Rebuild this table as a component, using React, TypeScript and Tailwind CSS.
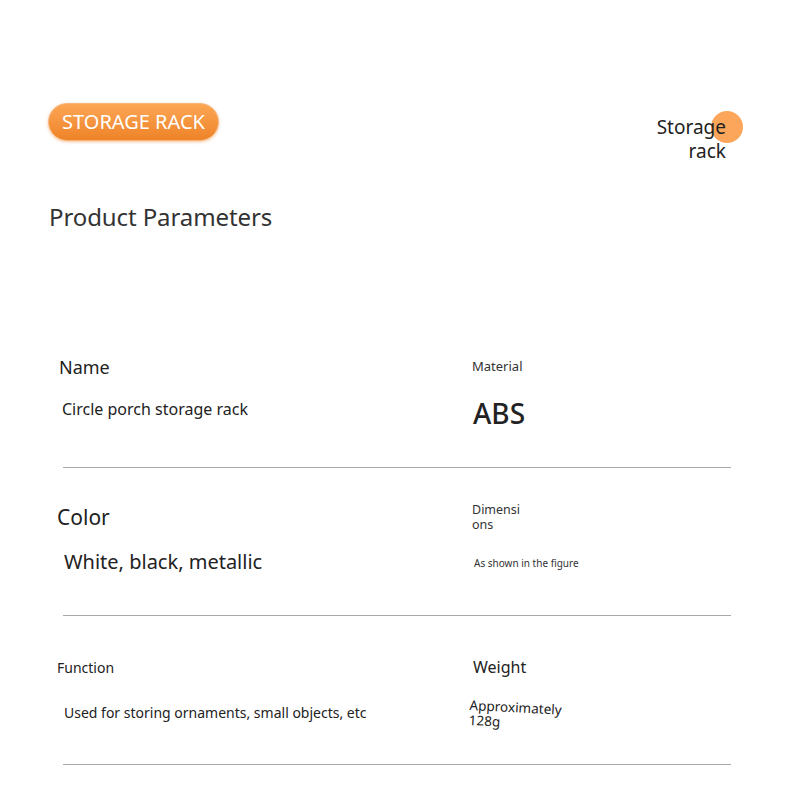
export default function App() {
  return (
    <div className="w-[790px] h-[803px] bg-white font-['Noto_Sans',sans-serif] text-[#222] overflow-hidden">
      <div className="flex justify-between items-start pt-[103px] pl-[48px] pr-[64px]">
        <div className="h-[38px] w-[171px] rounded-full bg-gradient-to-b from-[#fca654] to-[#ee8326] border border-[#f7b57a] shadow-[0_1px_3px_rgba(230,120,30,0.45)] flex items-center justify-center text-white text-[20px] leading-none">
          STORAGE RACK
        </div>
        <div className="relative mt-[12px] text-right text-[19px] leading-[24px]">
          <div className="absolute left-[54px] top-[-4px] w-[32px] h-[32px] rounded-full bg-[#fba65a]"></div>
          <div className="relative">
            Storage
            <br />
            rack
          </div>
        </div>
      </div>

      <h2 className="mt-[38px] ml-[49px] text-[24px] leading-[32px] text-[#333] tracking-[-0.1px]">Product Parameters</h2>

      <div className="mt-[117px]">
        <div className="flex h-[117px]">
          <div className="w-[472px] pt-[5px]">
            <div className="ml-[59px] text-[18px] leading-[24px]">Name</div>
            <div className="ml-[62px] mt-[19px] text-[16px] leading-[22px]">Circle porch storage rack</div>
          </div>
          <div className="pt-[7px]">
            <div className="text-[13px] leading-[18px] text-[#333]">Material</div>
            <div className="ml-[1px] mt-[20px] text-[28px] leading-[36px] font-medium">ABS</div>
          </div>
        </div>
        <div className="ml-[63px] w-[668px] h-px bg-[#a8a8a8]"></div>

        <div className="flex h-[147px]">
          <div className="w-[472px] pt-[35px]">
            <div className="ml-[57px] text-[21px] leading-[28px]">Color</div>
            <div className="ml-[64px] mt-[17px] text-[20px] leading-[28px]">White, black, metallic</div>
          </div>
          <div className="pt-[34px]">
            <div className="text-[12.5px] leading-[15px] text-[#333]">
              Dimensi
              <br />
              ons
            </div>
            <div className="ml-[2px] mt-[24px] text-[10px] leading-[14px] text-[#333]">As shown in the figure</div>
          </div>
        </div>
        <div className="ml-[63px] w-[668px] h-px bg-[#a8a8a8]"></div>

        <div className="flex h-[148px]">
          <div className="w-[472px] pt-[42px]">
            <div className="ml-[57px] text-[14px] leading-[20px]">Function</div>
            <div className="ml-[64px] mt-[25px] text-[14px] leading-[20px]">
              Used for storing ornaments, small objects, etc
            </div>
          </div>
          <div className="pt-[40px]">
            <div className="ml-[1px] text-[16px] leading-[22px]">Weight</div>
            <div className="ml-[-2px] mt-[20px] text-[13.5px] leading-[15px] rotate-[3deg] origin-top-left">
              Approximately
              <br />
              128g
            </div>
          </div>
        </div>
        <div className="ml-[63px] w-[668px] h-px bg-[#a8a8a8]"></div>
      </div>
    </div>
  );
}
